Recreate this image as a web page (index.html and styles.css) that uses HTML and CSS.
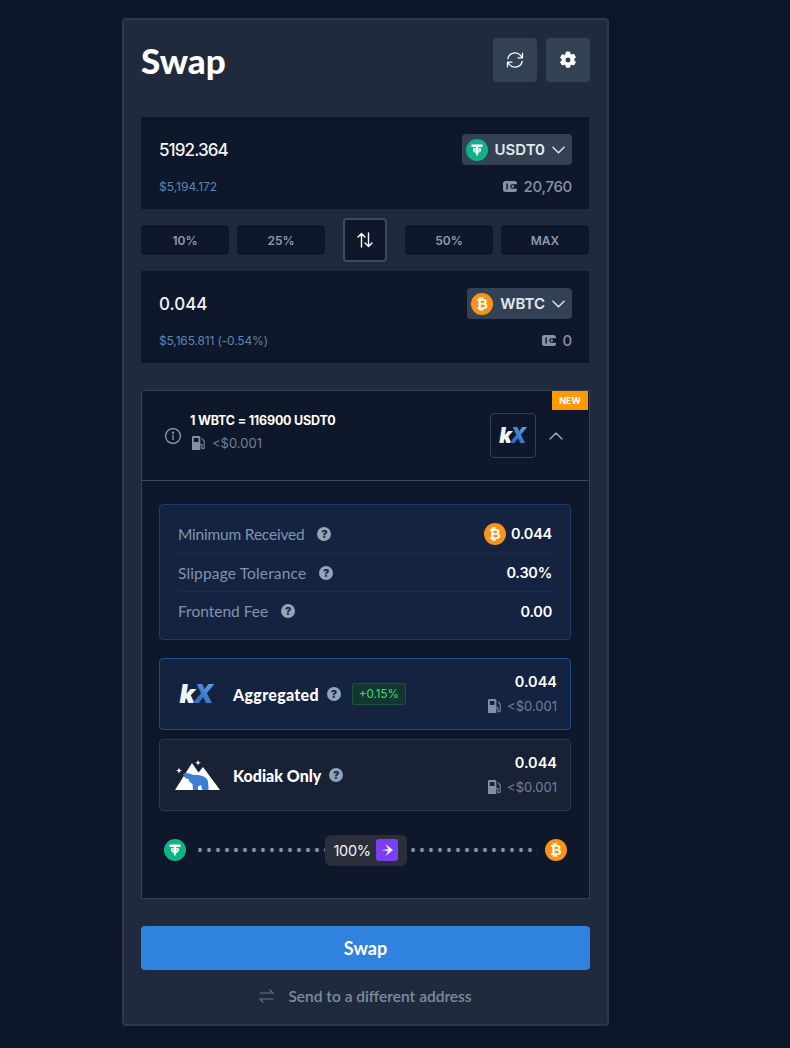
FILE: index.html
```html
<!DOCTYPE html>
<html lang="en">
<head>
<meta charset="utf-8">
<title>Swap</title>
<link rel="stylesheet" href="styles.css">
</head>
<body>
<svg class="defs" width="0" height="0" aria-hidden="true">
  <defs>
    <symbol id="usdt" viewBox="0 0 22 22">
      <circle cx="11" cy="11" r="11" fill="#10b386"/>
      <path fill="#fff" fill-rule="evenodd" d="M5.500 5.500h11v2.400h-4.300v1.300h2.700v3.300h-1.500v1.300h-1.200v1.700h-.8v1.600h-.8v-1.600h-.8v-1.700H8.600v-1.300H7.100V9.200h2.700V7.900H5.500zM8.500 10.400v1h1.300v-1zM12.200 10.400v1h1.300v-1z"/>
    </symbol>
    <symbol id="wallet" viewBox="0 0 14 11">
      <path fill="currentColor" d="M2.500 0h9A2.500 2.500 0 0 1 14 2.500v.7H9.500a2.300 2.300 0 0 0 0 4.600H14v.7A2.500 2.500 0 0 1 11.500 11h-9A2.500 2.500 0 0 1 0 8.500v-6A2.500 2.500 0 0 1 2.500 0zM3.400 2.500v6h1.400v-6z" fill-rule="evenodd"/>
      <circle cx="9.800" cy="5.500" r="1.200" fill="currentColor"/>
    </symbol>
    <symbol id="gas" viewBox="0 0 14 15">
      <path fill="currentColor" fill-rule="evenodd" d="M1.500 0h6A1.500 1.500 0 0 1 9 1.500V15H0V1.500A1.500 1.500 0 0 1 1.500 0zM2 2v4.500h5V2z"/>
      <path fill="none" stroke="currentColor" stroke-width="1.100" stroke-linecap="round" stroke-linejoin="round" d="M9.500 9h1.200v3.500a1.200 1.200 0 0 0 2.400 0V5.500L11 3"/>
    </symbol>
    <symbol id="bear" viewBox="0 0 46 30">
      <path fill="#fff" d="M0 30 17 3l6.500 9.500L28 7l17 23z"/>
      <path fill="#3b7fd4" d="M8 14.500c1-1.200 3-2 5-1.300 2.500.8 5 1.800 8 1.800 5 0 10 1.500 11.500 5 .8 2 1 5.500 1 10h-6l-1.500-5-3 1.500V30h-5l-.5-6c-2.500-1-3.500-3-4-5-1.800 0-3.500-1-4.500-2.500z"/>
      <path fill="#fff" d="m4 7.800.8 2 2 .8-2 .8-.8 2-.8-2-2-.8 2-.8zM23 0l.8 2 2 .8-2 .8-.8 2-.8-2-2-.8 2-.8z"/>
    </symbol>
  </defs>
</svg>
<main class="card">
  <header class="head">
    <h1 class="title">Swap</h1>
    <div class="head-actions">
      <button class="icon-btn" aria-label="Refresh">
        <svg width="18" height="18" viewBox="0 0 18 18" fill="none" stroke="#fff" stroke-width="1.300" stroke-linecap="round" stroke-linejoin="round"><path d="M1.800 7.600A7.300 7.300 0 0 1 14.500 4.400L16.500 6.800M16.500 2.200v4.600h-4.400"/><path d="M16.200 10.400A7.300 7.300 0 0 1 3.500 13.600L1.500 11.200M1.500 15.800v-4.600h4.400"/></svg>
      </button>
      <button class="icon-btn" aria-label="Settings">
        <svg width="18" height="18" viewBox="0 0 18 18"><path fill="#fff" stroke="#fff" stroke-width="1" stroke-linejoin="round" fill-rule="evenodd" d="M7.300 1h3.400l.5 2.200 1.400.8 2.200-.7 1.700 3-1.700 1.500v1.600l1.700 1.500-1.700 3-2.200-.7-1.400.8-.5 2.200H7.300l-.5-2.200-1.400-.8-2.200.7-1.700-3L3.200 9.800V8.200L1.500 6.700l1.700-3 2.200.7 1.400-.8zM9 6a3 3 0 1 0 0 6 3 3 0 0 0 0-6z"/></svg>
      </button>
    </div>
  </header>

  <section class="panel">
    <div class="panel-row">
      <span class="amount amount-tight">5192.364</span>
      <button class="token">
        <svg class="tk" width="22" height="22"><use href="#usdt"/></svg>
        <span>USDT0</span>
        <svg class="chev" width="13" height="8" viewBox="0 0 14 8" fill="none" stroke="#e2e8f0" stroke-width="1.500" stroke-linecap="round" stroke-linejoin="round"><path d="m1 1 6 6 6-6"/></svg>
      </button>
    </div>
    <div class="panel-row">
      <span class="usd">$5,194.172</span>
      <span class="bal"><svg width="14" height="11"><use href="#wallet"/></svg>20,760</span>
    </div>
  </section>

  <div class="pcts">
    <button class="pct">10%</button>
    <button class="pct">25%</button>
    <button class="flip" aria-label="Flip">
      <svg width="16" height="16" viewBox="0 0 16 16" fill="none" stroke="#fff" stroke-width="1.400" stroke-linecap="round" stroke-linejoin="round"><path d="M4.500 15V1.500M1 5l3.500-3.500L8 5M11.500 1v13.500M8 11l3.500 3.500L15 11"/></svg>
    </button>
    <button class="pct">50%</button>
    <button class="pct">MAX</button>
  </div>

  <section class="panel">
    <div class="panel-row">
      <span class="amount">0.044</span>
      <button class="token">
        <span class="btc btc-22">₿</span>
        <span>WBTC</span>
        <svg class="chev" width="13" height="8" viewBox="0 0 14 8" fill="none" stroke="#e2e8f0" stroke-width="1.500" stroke-linecap="round" stroke-linejoin="round"><path d="m1 1 6 6 6-6"/></svg>
      </button>
    </div>
    <div class="panel-row">
      <span class="usd usd-tight">$5,165.811 (-0.54%)</span>
      <span class="bal"><svg width="14" height="11"><use href="#wallet"/></svg>0</span>
    </div>
  </section>

  <section class="route">
    <span class="new">NEW</span>
    <div class="summary">
      <svg class="info" width="18" height="18" viewBox="0 0 18 18" fill="none" stroke="#94a3b8" stroke-width="1.200"><circle cx="9" cy="9" r="7.400"/><path d="M9 8.200v4.300" stroke-linecap="round"/><circle cx="9" cy="5.700" r=".5" fill="#94a3b8"/></svg>
      <div class="rate">
        <div class="rate-main">1 WBTC = 116900 USDT0</div>
        <div class="gas"><svg width="13" height="14"><use href="#gas"/></svg><span>&lt;$0.001</span></div>
      </div>
      <div class="kx-box"><span class="kx kx-sm"><i>k</i><b>X</b></span></div>
      <svg class="up" width="14" height="8" viewBox="0 0 14 8" fill="none" stroke="#94a3b8" stroke-width="1.500" stroke-linecap="round" stroke-linejoin="round"><path d="m1 7 6-6 6 6"/></svg>
    </div>

    <div class="details">
      <div class="stats">
        <div class="stat">
          <span class="stat-label label-tight">Minimum Received<span class="q">?</span></span>
          <span class="stat-val"><span class="btc btc-22">₿</span>0.044</span>
        </div>
        <div class="stat">
          <span class="stat-label label-wide">Slippage Tolerance<span class="q">?</span></span>
          <span class="stat-val">0.30%</span>
        </div>
        <div class="stat">
          <span class="stat-label">Frontend Fee<span class="q">?</span></span>
          <span class="stat-val">0.00</span>
        </div>
      </div>

      <div class="option selected">
        <span class="opt-logo"><span class="kx"><i>k</i><b>X</b></span></span>
        <span class="opt-name name-wide">Aggregated</span><span class="q q-near">?</span>
        <span class="gain">+0.15%</span>
        <div class="opt-right">
          <span class="opt-amt">0.044</span>
          <span class="gas"><svg width="13" height="14"><use href="#gas"/></svg><span>&lt;$0.001</span></span>
        </div>
      </div>

      <div class="option">
        <span class="opt-logo"><svg width="46" height="30"><use href="#bear"/></svg></span>
        <span class="opt-name">Kodiak Only</span><span class="q q-near">?</span>
        <div class="opt-right">
          <span class="opt-amt">0.044</span>
          <span class="gas"><svg width="13" height="14"><use href="#gas"/></svg><span>&lt;$0.001</span></span>
        </div>
      </div>

      <div class="path">
        <svg width="22" height="22"><use href="#usdt"/></svg>
        <span class="dots dots-in"></span>
        <span class="hop">100%
          <span class="hop-icon"><svg width="14" height="14" viewBox="0 0 14 14" fill="#ece4ff"><path d="M5.500 1 13 7l-7.500 6L8 8 1.500 7.300 8 6z"/></svg></span>
        </span>
        <span class="dots dots-out"></span>
        <span class="btc btc-22">₿</span>
      </div>
    </div>
  </section>

  <button class="cta">Swap</button>
  <div class="send">
    <svg width="15" height="14" viewBox="0 0 15 14" fill="none" stroke="#64748b" stroke-width="1.200" stroke-linecap="round" stroke-linejoin="round"><path d="M1 4h13M11 1l3 3M14 10H1M4 13l-3-3"/></svg>
    <span>Send to a different address</span>
  </div>
</main>
</body>
</html>
```
FILE: styles.css
```css
* { box-sizing: border-box; }
html, body { margin: 0; padding: 0; }
body {
  background: #0e172a;
  color: #fff;
  font-family: Inter, "Liberation Sans", sans-serif;
  height: 1048px;
  overflow: hidden;
  padding: 18px 0 0 122px;
}
button { font: inherit; border: 0; color: inherit; padding: 0; }
.defs { position: absolute; }

.card {
  width: 487px;
  height: 1008px;
  background: #1f2a3c;
  border: 2px solid #2b384b;
  border-radius: 4px;
  padding: 18px 17px 0;
}

.head { display: flex; justify-content: space-between; align-items: center; height: 44px; margin-bottom: 35px; }
.title { margin: 0; font: 900 35px/44px Lato, sans-serif; }
.head-actions { display: flex; gap: 9px; }
.icon-btn { width: 44px; height: 44px; background: #334155; border-radius: 4px; display: flex; align-items: center; justify-content: center; }

.panel {
  width: 448px; height: 92px; background: #0f172a;
  padding: 17px 17px 0 18px;
  display: flex; flex-direction: column; gap: 12px;
}
.panel-row { display: flex; justify-content: space-between; align-items: center; min-height: 19px; }
.amount { font-size: 17px; font-weight: 500; color: #f1f5f9; line-height: 29px; padding-top: 2px; }
.amount-tight { letter-spacing: -.9px; }
.token {
  height: 31px; background: #334155; border-radius: 4px; color: #e2e8f0;
  display: flex; align-items: center; gap: 7px; padding: 0 7px 0 4px;
  font-size: 15px; font-weight: 600;
}
.tk { display: block; }
.usd { font-size: 12px; color: #5b86b3; }
.usd-tight { letter-spacing: -.15px; }
.bal { display: flex; align-items: center; gap: 7px; font-size: 15px; letter-spacing: -.3px; font-weight: 500; color: #8593a8; }

.pcts { display: flex; align-items: center; height: 62px; width: 448px; }
.pct {
  width: 88px; height: 30px; background: #0f172a; color: #8c9ab0; border-radius: 4px;
  font-size: 12px; font-weight: 600; margin-right: 8px;
}
.pct:nth-child(2), .pct:last-child { margin-right: 0; }
.flip {
  width: 44px; height: 44px; margin: 0 18px; background: #0f172a;
  border: 2px solid #3d4a5d; border-radius: 4px;
  display: flex; align-items: center; justify-content: center;
}

.route {
  position: relative;
  margin-top: 27px; width: 449px; height: 509px;
  background: #0f172a; border: 1px solid #334155;
}
.new {
  position: absolute; top: 0; right: 1px; width: 36px; height: 19px;
  background: #ff9900; color: #fff; font-size: 9px; font-weight: 700;
  display: flex; align-items: center; justify-content: center;
}
.summary {
  height: 90px; border-bottom: 1px solid #3d4a5d;
  display: flex; align-items: center; padding: 0 25px 0 22px; margin-right: 1px;
}
.info { flex: none; }
.rate { margin-left: 8px; flex: 1; padding-bottom: 7px; }
.rate-main { font-size: 12.500px; font-weight: 700; letter-spacing: -.2px; line-height: 16px; }
.gas { display: flex; align-items: center; gap: 6px; font-size: 13px; color: #70809a; line-height: 16px; }
.gas svg { color: #8190a6; flex: none; }
.rate .gas { margin-top: 6px; margin-left: 2px; gap: 7px; }
.kx-box {
  width: 46px; height: 45px; border: 1px solid #334155; border-radius: 4px;
  display: flex; align-items: center; justify-content: center; margin-right: 13px;
}
.kx { font: italic 900 26px/1 Inter, sans-serif; letter-spacing: -2px; display: inline-flex; }
.kx i { color: #f1f5f9; font-style: italic; }
.kx b {
  font-weight: 900;
  background: linear-gradient(45deg, #2f6fc4 30%, #6aa5e8 100%);
  -webkit-background-clip: text; background-clip: text; color: transparent;
  padding-right: 2px;
}
.kx-sm { font-size: 21px; }

.details { padding: 23px 18px 0 17px; }
.stats {
  height: 136px; background: #14233f; border: 1px solid #1f3a6b; border-radius: 4px;
  padding: 9px 18px 0 18px;
}
.stat { display: flex; justify-content: space-between; align-items: center; height: 38px; border-bottom: 1px solid #1b2d4d; }
.stat:first-child { height: 40px; }
.stat:last-child { border-bottom: 0; }
.stat-label { font-size: 15.500px; color: #8293ab; display: flex; align-items: center; font-family: Lato, sans-serif; }
.label-tight { letter-spacing: -.2px; }
.label-wide { letter-spacing: .15px; }
.q {
  width: 14px; height: 14px; border-radius: 50%; background: #94a3b8; color: #14233f; letter-spacing: 0;
  font-size: 11px; font-weight: 800; font-family: Inter, sans-serif; margin-left: 13px;
  display: inline-flex; align-items: center; justify-content: center; flex: none;
}
.q-near { margin-left: 8px; }
.stat-val { display: flex; align-items: center; gap: 5px; font-size: 14.500px; letter-spacing: -.25px; font-weight: 600; }

.btc {
  border-radius: 50%; background: #f7931a; color: #fff; font-family: "DejaVu Sans", sans-serif; font-weight: 700;
  display: inline-flex; align-items: center; justify-content: center; flex: none;
}
.btc-22 { width: 22px; height: 22px; font-size: 14px; letter-spacing: 0; }

.option {
  height: 72px; margin-top: 18px;
  background: #14233f; border: 1px solid #1f4a8f; border-radius: 4px;
  display: flex; align-items: center; padding: 0 13px 0 15px;
}
.option:not(.selected) { margin-top: 9px; background: #182234; border-color: #2b384b; }
.opt-logo { width: 58px; flex: none; display: flex; justify-content: center; padding-right: 12px; }
.selected .opt-logo { padding-right: 15px; }
.opt-name { font-family: Lato, sans-serif; font-size: 16px; font-weight: 900; }
.name-wide { letter-spacing: .3px; }
.gain {
  margin-left: 11px; height: 22px; padding: 0 6px; background: #13362f; border: 1px solid #1d5340;
  border-radius: 2px; color: #3ddc78; font-size: 11.500px; display: flex; align-items: center;
}
.opt-right { margin-left: auto; display: flex; flex-direction: column; align-items: flex-end; gap: 8px; }
.opt-amt { font-size: 14.500px; font-weight: 600; line-height: 16px; }

.path { display: flex; align-items: center; margin-top: 23px; padding: 0 4px 0 5px; height: 32px; }
.path > svg { flex: none; }
.dots {
  flex: 1; height: 4px;
  background: radial-gradient(circle, #8a93a6 1.800px, transparent 2.200px) -2.500px 0 / 9px 4px repeat-x;
}
.dots-in { margin: 0 0 0 12px; }
.dots-out { margin: 0 8px 0 4px; }
.hop {
  flex: none; width: 82px; height: 31px; background: #2a2f3a; border-radius: 6px;
  display: flex; align-items: center; justify-content: space-between; padding: 0 9px;
  font-size: 14.500px; letter-spacing: -.3px; color: #f1f5f9;
}
.hop-icon { width: 22px; height: 22px; background: #7b3ff2; border-radius: 3px; display: flex; align-items: center; justify-content: center; }

.cta {
  display: block; width: 449px; height: 44px; margin-top: 27px;
  background: #2f82de; border-radius: 4px; font-family: Lato, sans-serif; font-size: 18px; font-weight: 700;
}
.send {
  display: flex; align-items: center; justify-content: center; gap: 14px;
  height: 20px; margin-top: 16px; color: #7d8aa0;
  font-family: Lato, sans-serif; font-size: 15.500px; font-weight: 600; width: 449px;
}
```
